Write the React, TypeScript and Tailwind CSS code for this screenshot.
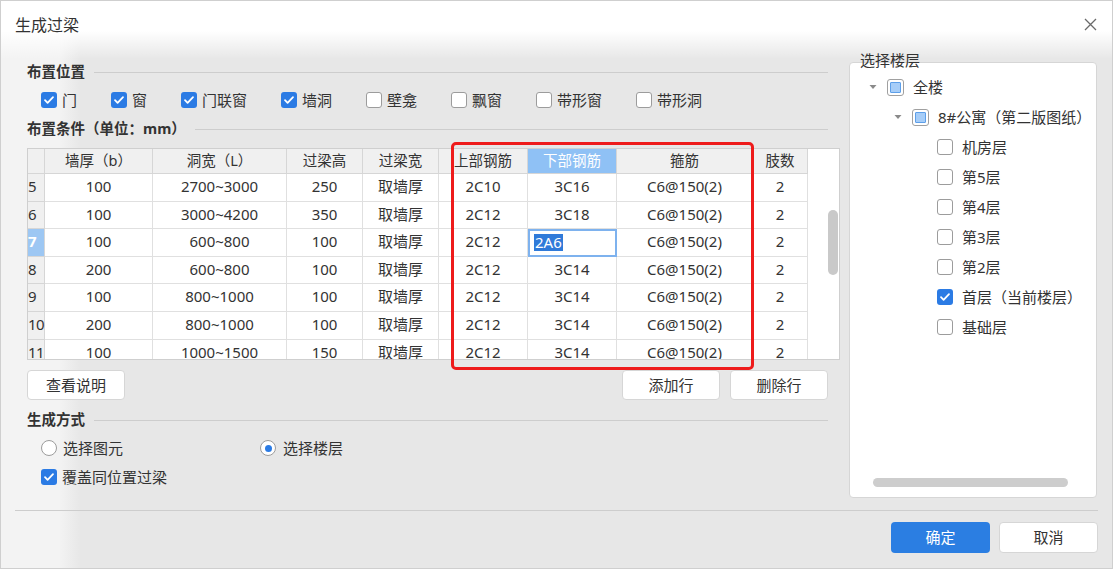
import React from 'react';

type Row = {
  no: number;
  b: string;
  l: string;
  h: string;
  w: string;
  top: string;
  bottom: string;
  stirrup: string;
  legs: string;
};

const rows: Row[] = [
  { no: 5, b: '100', l: '2700~3000', h: '250', w: '取墙厚', top: '2C10', bottom: '3C16', stirrup: 'C6@150(2)', legs: '2' },
  { no: 6, b: '100', l: '3000~4200', h: '350', w: '取墙厚', top: '2C12', bottom: '3C18', stirrup: 'C6@150(2)', legs: '2' },
  { no: 7, b: '100', l: '600~800', h: '100', w: '取墙厚', top: '2C12', bottom: '2A6', stirrup: 'C6@150(2)', legs: '2' },
  { no: 8, b: '200', l: '600~800', h: '100', w: '取墙厚', top: '2C12', bottom: '3C14', stirrup: 'C6@150(2)', legs: '2' },
  { no: 9, b: '100', l: '800~1000', h: '100', w: '取墙厚', top: '2C12', bottom: '3C14', stirrup: 'C6@150(2)', legs: '2' },
  { no: 10, b: '200', l: '800~1000', h: '100', w: '取墙厚', top: '2C12', bottom: '3C14', stirrup: 'C6@150(2)', legs: '2' },
  { no: 11, b: '100', l: '1000~1500', h: '150', w: '取墙厚', top: '2C12', bottom: '3C14', stirrup: 'C6@150(2)', legs: '2' },
];

const floors = ['机房层', '第5层', '第4层', '第3层', '第2层', '首层（当前楼层）', '基础层'];

function Box({ on }: { on?: boolean }) {
  if (on) {
    return (
      <span className="flex h-[16px] w-[16px] shrink-0 items-center justify-center rounded-[3px] bg-[#2b7be4]">
        <svg width="12" height="12" viewBox="0 0 12 12" fill="none">
          <path d="M2 6.2l2.6 2.6L10 3.2" stroke="#fff" strokeWidth="1.8" strokeLinecap="round" strokeLinejoin="round" />
        </svg>
      </span>
    );
  }
  return <span className="h-[16px] w-[16px] shrink-0 rounded-[3px] border border-[#9c9c9c] bg-white" />;
}

function Partial() {
  return (
    <span className="flex h-[17px] w-[17px] shrink-0 items-center justify-center rounded-[3px] border border-[#a0a0a0] bg-white">
      <span className="h-[11px] w-[11px] rounded-[1px] border border-[#5d9fe9] bg-[#a6cdf8]" />
    </span>
  );
}

function Caret() {
  return (
    <svg width="8" height="6" viewBox="0 0 8 6" className="shrink-0">
      <path d="M0.5 1h7L4 5z" fill="#8a8a8a" />
    </svg>
  );
}

function Heading({ text, className = '' }: { text: string; className?: string }) {
  return (
    <div className={`flex h-[20px] items-center pr-[12px] ${className}`}>
      <span className="text-[14.5px] font-bold text-[#333]">{text}</span>
      <span className="ml-[9px] h-px flex-1 bg-[#cdcdcd]" />
    </div>
  );
}

function Btn({ children, primary }: { children: React.ReactNode; primary?: boolean }) {
  return (
    <div
      className={
        primary
          ? 'flex h-[31px] w-[99px] items-center justify-center rounded-[4px] bg-[#2b7ee2] text-[15px] text-white'
          : 'flex h-[30px] w-[98px] items-center justify-center rounded-[4px] border border-[#d6d6d6] bg-white text-[15px] text-[#333]'
      }
    >
      {children}
    </div>
  );
}

const grid = 'grid grid-cols-[17px_108px_134px_76px_76px_89px_89px_136px_55px_1fr]';
const hd = 'flex h-[25px] items-center justify-center border-r border-b border-[#d6d6d6] bg-[#f0f0f0] text-[14.5px] text-[#333]';
const td = 'flex h-[27.6px] items-center justify-center border-r border-b border-[#e0e0e0] bg-white pb-[2px] text-[15px] text-[#333]';

function Table() {
  const heads = ['墙厚（b）', '洞宽（L）', '过梁高', '过梁宽', '上部钢筋', '下部钢筋', '箍筋', '肢数'];
  return (
    <div className="relative mt-[9px] h-[212px] w-[813px]">
      <div className="h-full overflow-hidden border border-[#cfcfcf] bg-white">
        <div className={grid}>
          <div className={hd} />
          {heads.map((h) => (
            <div key={h} className={h === '下部钢筋' ? `${hd} !bg-[#8fc1f5] !text-white` : hd}>
              {h}
            </div>
          ))}
          <div className="h-[25px] bg-white" />
        </div>
        {rows.map((r) => (
          <div key={r.no} className={grid}>
            <div
              className={
                r.no === 7
                  ? 'flex h-[27.6px] items-center border-r border-b border-[#d6d6d6] bg-[#9dc7f3] pb-[2px] text-[15px] font-bold text-white'
                  : 'flex h-[27.6px] items-center border-r border-b border-[#d6d6d6] bg-[#f0f0f0] pb-[2px] text-[15px] tracking-[-0.5px] text-[#333]'
              }
            >
              {r.no}
            </div>
            <div className={td}>{r.b}</div>
            <div className={td}>{r.l}</div>
            <div className={td}>{r.h}</div>
            <div className={td}>{r.w}</div>
            <div className={td}>{r.top}</div>
            {r.no === 7 ? (
              <div className="flex h-[27.6px] items-center border-2 border-[#7eb2ee] bg-white text-[15px]">
                <span className="ml-[4px] bg-[#2f7ad9] px-[1px] leading-[17px] text-white">{r.bottom}</span>
              </div>
            ) : (
              <div className={td}>{r.bottom}</div>
            )}
            <div className={td}>{r.stirrup}</div>
            <div className={td}>{r.legs}</div>
            <div className="h-[27.6px] bg-white" />
          </div>
        ))}
      </div>
      {/* vertical scroll thumb */}
      <div className="absolute left-[801px] top-[62px] h-[65px] w-[10px] rounded-full bg-[#c9c9c9]" />
      {/* red highlight frame */}
      <div className="pointer-events-none absolute left-[424px] top-[-6px] h-[228px] w-[303px] rounded-[5px] border-[3px] border-[#ee1b1b]" />
    </div>
  );
}

export default function App() {
  const places: [string, boolean][] = [
    ['门', true],
    ['窗', true],
    ['门联窗', true],
    ['墙洞', true],
    ['壁龛', false],
    ['飘窗', false],
    ['带形窗', false],
    ['带形洞', false],
  ];

  return (
    <div className="flex h-[569px] w-[1113px] flex-col border border-[#cfcfcf] bg-[#e6e6e6] bg-[image:linear-gradient(to_bottom,#ffffff_0px,#ffffff_30px,rgba(255,255,255,0)_58px),linear-gradient(to_right,#f3f3f3_0px,#f3f3f3_58px,#e7e7e7_80px)] font-['Noto_Sans','Noto_Sans_CJK_SC',sans-serif] text-[#333]">
      {/* title bar */}
      <div className="flex h-[47px] shrink-0 items-center justify-between pl-[14px] pr-[15px]">
        <span className="text-[16px] text-[#333]">生成过梁</span>
        <svg width="13" height="13" viewBox="0 0 13 13">
          <path d="M1 1l11 11M12 1L1 12" stroke="#6a6a6a" strokeWidth="1.3" />
        </svg>
      </div>

      {/* body */}
      <div className="flex h-[462px] shrink-0 pl-[26px]">
        <div className="flex w-[813px] flex-col">
          <Heading text="布置位置" className="mt-[14px]" />
          <div className="mt-[8px] flex h-[20px] items-center gap-[34px] pl-[14px]">
            {places.map(([t, on]) => (
              <div key={t} className="flex items-center gap-[5px]">
                <Box on={on} />
                <span className="text-[15px]">{t}</span>
              </div>
            ))}
          </div>
          <Heading text="布置条件（单位：mm）" className="mt-[9px]" />
          <Table />
          <div className="mt-[10px] flex items-center pr-[12px]">
            <Btn>查看说明</Btn>
            <div className="ml-auto flex gap-[10px]">
              <Btn>添加行</Btn>
              <Btn>删除行</Btn>
            </div>
          </div>
          <Heading text="生成方式" className="mt-[10px]" />
          <div className="mt-[8px] flex h-[20px] items-center pl-[14px]">
            <div className="flex w-[219px] items-center gap-[6px]">
              <span className="h-[16px] w-[16px] rounded-full border border-[#9c9c9c] bg-white" />
              <span className="text-[15px]">选择图元</span>
            </div>
            <div className="flex items-center gap-[7px]">
              <span className="flex h-[16px] w-[16px] items-center justify-center rounded-full border border-[#9c9c9c] bg-white">
                <span className="h-[7px] w-[7px] rounded-full bg-[#2b7be4]" />
              </span>
              <span className="text-[15px]">选择楼层</span>
            </div>
          </div>
          <div className="mt-[9px] flex h-[20px] items-center gap-[5px] pl-[14px]">
            <Box on />
            <span className="text-[15px]">覆盖同位置过梁</span>
          </div>
        </div>

        {/* floor picker */}
        <div className="ml-[9px] flex w-[248px] flex-col">
          <div className="relative z-10 mt-[4px] h-[16px] pl-[11px] text-[15px] leading-[16px]">选择楼层</div>
          <div className="-mt-[6px] flex h-[436px] flex-col rounded-[4px] border border-[#d6d6d6] bg-white">
            <div className="flex flex-col pt-[9px]">
              <div className="flex h-[30px] items-center pl-[19px]">
                <Caret />
                <span className="ml-[10px]">
                  <Partial />
                </span>
                <span className="ml-[9px] text-[15px]">全楼</span>
              </div>
              <div className="flex h-[30px] items-center pl-[44px]">
                <Caret />
                <span className="ml-[10px]">
                  <Partial />
                </span>
                <span className="ml-[9px] text-[15px]">8#公寓（第二版图纸）</span>
              </div>
              {floors.map((f) => (
                <div key={f} className="flex h-[30px] items-center pl-[87px]">
                  <Box on={f.startsWith('首层')} />
                  <span className="ml-[9px] text-[15px]">{f}</span>
                </div>
              ))}
            </div>
            <div className="mt-auto mb-[10px] ml-[23px] h-[9px] w-[195px] rounded-full bg-[#cdcdcd]" />
          </div>
        </div>
      </div>

      {/* footer */}
      <div className="mx-[14px] h-px shrink-0 bg-[#cdcdcd]" />
      <div className="flex justify-end gap-[9px] pr-[14px] pt-[11px]">
        <Btn primary>确定</Btn>
        <div className="flex h-[31px] w-[99px] items-center justify-center rounded-[4px] border border-[#d6d6d6] bg-white text-[15px] text-[#333]">
          取消
        </div>
      </div>
    </div>
  );
}
